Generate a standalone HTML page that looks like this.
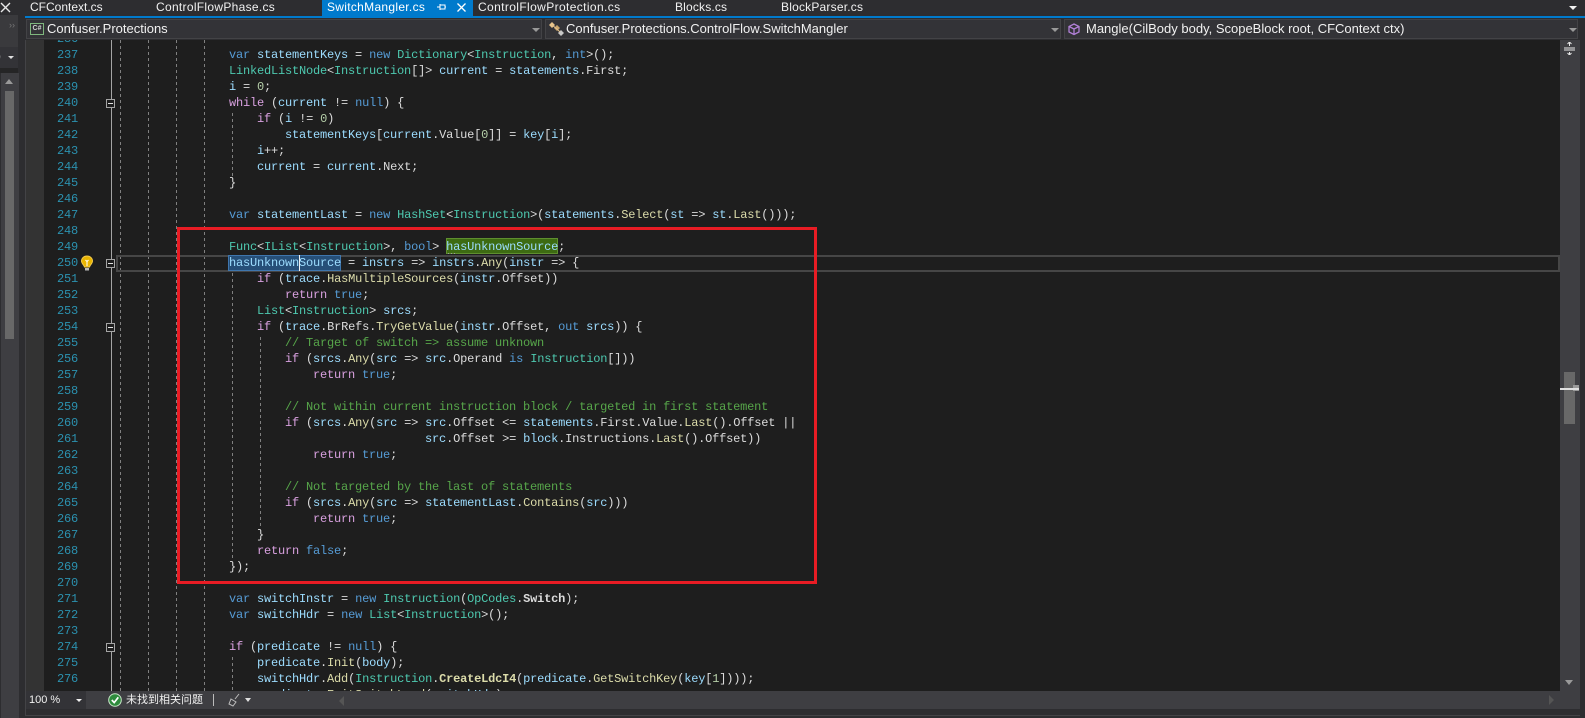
<!DOCTYPE html>
<html><head><meta charset="utf-8"><style>
html,body{margin:0;padding:0;background:#2d2d30;width:1585px;height:718px;overflow:hidden}
*{box-sizing:border-box}
.a{position:absolute}
.ui{font-family:"Liberation Sans","Noto Sans CJK SC",sans-serif;font-size:12px;color:#f1f1f1;white-space:pre;line-height:16px}
.nv{font-size:13px}
pre{margin:0;font-family:"Liberation Mono",monospace;font-size:12px;letter-spacing:-.2px;line-height:16px;color:#dcdcdc}
pre i{font-style:normal}
.k{color:#569cd6}.c{color:#d8a0df}.t{color:#4ec9b0}.v{color:#9cdcfe}.m{color:#dcdcaa}.g{color:#57a64a}.n{color:#b5cea8}
.mb{color:#dcdcaa;font-weight:bold}.w{color:#dcdcdc;font-weight:bold}
.gd{position:absolute;width:1px;background:repeating-linear-gradient(to bottom,#808080 0 3px,transparent 3px 6px)}
.fb{position:absolute;left:106px;width:9px;height:9px;background:#1e1e1e;border:1px solid #a5a5a5}
.fb:after{content:"";position:absolute;left:1px;top:3px;width:5px;height:1px;background:#e0e0e0}
.combo{position:absolute;top:19px;height:20px;background:#333337;border:1px solid #434346}
.arr{position:absolute;width:0;height:0;border-left:4px solid transparent;border-right:4px solid transparent;border-top:4px solid #999}
</style></head><body>

<!-- left panel -->
<div class="a" style="left:0;top:15px;width:18px;height:32px;background:#3a3a3d"></div>
<div class="a ui" style="left:9px;top:17px;color:#777;font-size:9px">››</div>
<div class="a" style="left:0;top:47px;width:18px;height:21px;background:#333337"></div>
<div class="a ui" style="left:-6px;top:49px;font-weight:bold">0</div>
<div class="arr" style="left:8px;top:56px;border-top-color:#e0e0e0;border-left-width:3px;border-right-width:3px;border-top-width:3px"></div>
<div class="a" style="left:0;top:68px;width:18px;height:5px;background:#252526"></div>
<div class="a" style="left:1px;top:73px;width:18px;height:645px;background:#3e3e42"></div>
<div class="a" style="left:5px;top:91px;width:9px;height:248px;background:#686868"></div>
<div class="a" style="left:5px;top:79px;width:0;height:0;border-left:4.5px solid transparent;border-right:4.5px solid transparent;border-bottom:5px solid #999"></div>
<svg class="a" style="left:0;top:2px" width="11" height="11"><path d="M1 1L10 10M10 1L1 10" stroke="#e8e8e8" stroke-width="1.4"/></svg>

<!-- tabs -->
<div class="a" style="left:322px;top:0;width:151px;height:16px;background:#007acc"></div>
<div class="a" style="left:25px;top:16px;width:1560px;height:2px;background:#007acc"></div>
<div class="a ui" style="left:30px;top:-1px">CFContext.cs</div>
<div class="a ui" style="left:156px;top:-1px;letter-spacing:.3px">ControlFlowPhase.cs</div>
<div class="a ui" style="left:327px;top:-1px;color:#fff;letter-spacing:.3px">SwitchMangler.cs</div>
<svg class="a" style="left:437px;top:3px" width="10" height="10"><path d="M3 1V7M3 2H8V6H3M8 4H9M0 4H3" stroke="#fff" fill="none"/></svg>
<svg class="a" style="left:456px;top:2px" width="11" height="11"><path d="M1.5 1.5L9.5 9.5M9.5 1.5L1.5 9.5" stroke="#fff" stroke-width="1.3"/></svg>
<div class="a ui" style="left:478px;top:-1px;letter-spacing:.38px">ControlFlowProtection.cs</div>
<div class="a ui" style="left:675px;top:-1px;letter-spacing:.17px">Blocks.cs</div>
<div class="a ui" style="left:781px;top:-1px;letter-spacing:.2px">BlockParser.cs</div>
<div class="a" style="left:1569px;top:6px;width:0;height:0;border-left:4px solid transparent;border-right:4px solid transparent;border-top:4px solid #f1f1f1"></div>

<!-- nav -->
<div class="combo" style="left:26px;width:516px"></div>
<div class="combo" style="left:545px;width:516px"></div>
<div class="combo" style="left:1064px;width:514px"></div>
<div class="a" style="left:30px;top:23px;width:14px;height:12px;border:1px solid #7fb77e;color:#d0d0d0;font:bold 7px/10px 'Liberation Sans',sans-serif;text-align:center">C#</div>
<div class="a ui nv" style="left:47px;top:21px">Confuser.Protections</div>
<div class="arr" style="left:532px;top:28px"></div>
<svg class="a" style="left:548px;top:21px" width="16" height="16"><path d="M1 4L4 1L7 4L4 7Z" fill="#e8c48a"/><path d="M6 7L9 4L12 7L9 10Z" fill="#c9a56a"/><path d="M10 12L13 9L16 12L13 15Z" fill="#c8c8c8"/><path d="M4 4L9 8L12 11" stroke="#e0c090" fill="none"/></svg>
<div class="a ui nv" style="left:566px;top:21px">Confuser.Protections.ControlFlow.SwitchMangler</div>
<div class="arr" style="left:1051px;top:28px"></div>
<svg class="a" style="left:1067px;top:22px" width="14" height="14"><path d="M7 2L12 4.5V10L7 12.5L2 10V4.5ZM2 4.5L7 7L12 4.5M7 7V12.5" stroke="#b180d7" stroke-width="1.3" fill="none"/></svg>
<div class="a ui nv" style="left:1086px;top:21px">Mangle(CilBody body, ScopeBlock root, CFContext ctx)</div>
<div class="arr" style="left:1569px;top:28px"></div>

<!-- margin + editor -->
<div class="a" style="left:25px;top:40px;width:1px;height:675px;background:#434346"></div>
<div class="a" style="left:26px;top:40px;width:18px;height:651px;background:#333333"></div>
<div class="a" style="left:44px;top:40px;width:1516px;height:651px;background:#1e1e1e"></div>

<div class="a" id="ed" style="left:0;top:40px;width:1560px;height:651px;overflow:hidden">
<div class="a" style="left:111px;top:0;width:1px;height:651px;background:#a5a5a5"></div>
<div class="gd" style="left:120px;top:0;height:651px"></div>
<div class="gd" style="left:148px;top:0;height:651px"></div>
<div class="gd" style="left:176px;top:0;height:651px"></div>
<div class="gd" style="left:204px;top:0;height:651px"></div>
<div class="gd" style="left:232px;top:73px;height:64px"></div>
<div class="gd" style="left:232px;top:233px;height:285px"></div>
<div class="gd" style="left:260px;top:297px;height:189px"></div>
<div class="gd" style="left:232px;top:617px;height:34px"></div>
<div class="a" style="left:116px;top:215px;width:1444px;height:17px;border:2px solid #464646"></div>
<div class="a" style="left:446px;top:198px;width:112px;height:16px;background:#3d6b12;border:1px solid #5f8f2f"></div>
<div class="a" style="left:228px;top:215px;width:113px;height:16px;background:#264f78;border:1px solid #3f76ad"></div>
<div class="fb" style="top:59px"></div>
<div class="fb" style="top:219px"></div>
<div class="fb" style="top:283px"></div>
<div class="fb" style="top:603px"></div>
<pre class="a" style="left:57px;top:-9px;color:#2b91af">236
237
238
239
240
241
242
243
244
245
246
247
248
249
250
251
252
253
254
255
256
257
258
259
260
261
262
263
264
265
266
267
268
269
270
271
272
273
274
275
276</pre>
<pre class="a" style="left:229px;top:7px"><i class=k>var</i> <i class=v>statementKeys</i> = <i class=k>new</i> <i class=t>Dictionary</i>&lt;<i class=t>Instruction</i>, <i class=k>int</i>&gt;();
<i class=t>LinkedListNode</i>&lt;<i class=t>Instruction</i>[]&gt; <i class=v>current</i> = <i class=v>statements</i>.First;
<i class=v>i</i> = <i class=n>0</i>;
<i class=c>while</i> (<i class=v>current</i> != <i class=k>null</i>) {
    <i class=c>if</i> (<i class=v>i</i> != <i class=n>0</i>)
        <i class=v>statementKeys</i>[<i class=v>current</i>.Value[<i class=n>0</i>]] = <i class=v>key</i>[<i class=v>i</i>];
    <i class=v>i</i>++;
    <i class=v>current</i> = <i class=v>current</i>.Next;
}

<i class=k>var</i> <i class=v>statementLast</i> = <i class=k>new</i> <i class=t>HashSet</i>&lt;<i class=t>Instruction</i>&gt;(<i class=v>statements</i>.<i class=m>Select</i>(<i class=v>st</i> =&gt; <i class=v>st</i>.<i class=m>Last</i>()));

<i class=t>Func</i>&lt;<i class=t>IList</i>&lt;<i class=t>Instruction</i>&gt;, <i class=k>bool</i>&gt; <i class=v>hasUnknownSource</i>;
<i class=v>hasUnknownSource</i> = <i class=v>instrs</i> =&gt; <i class=v>instrs</i>.<i class=m>Any</i>(<i class=v>instr</i> =&gt; {
    <i class=c>if</i> (<i class=v>trace</i>.<i class=m>HasMultipleSources</i>(<i class=v>instr</i>.Offset))
        <i class=c>return</i> <i class=k>true</i>;
    <i class=t>List</i>&lt;<i class=t>Instruction</i>&gt; <i class=v>srcs</i>;
    <i class=c>if</i> (<i class=v>trace</i>.BrRefs.<i class=m>TryGetValue</i>(<i class=v>instr</i>.Offset, <i class=k>out</i> <i class=v>srcs</i>)) {
        <i class=g>// Target of switch =&gt; assume unknown</i>
        <i class=c>if</i> (<i class=v>srcs</i>.<i class=m>Any</i>(<i class=v>src</i> =&gt; <i class=v>src</i>.Operand <i class=k>is</i> <i class=t>Instruction</i>[]))
            <i class=c>return</i> <i class=k>true</i>;

        <i class=g>// Not within current instruction block / targeted in first statement</i>
        <i class=c>if</i> (<i class=v>srcs</i>.<i class=m>Any</i>(<i class=v>src</i> =&gt; <i class=v>src</i>.Offset &lt;= <i class=v>statements</i>.First.Value.<i class=m>Last</i>().Offset ||
                            <i class=v>src</i>.Offset &gt;= <i class=v>block</i>.Instructions.<i class=m>Last</i>().Offset))
            <i class=c>return</i> <i class=k>true</i>;

        <i class=g>// Not targeted by the last of statements</i>
        <i class=c>if</i> (<i class=v>srcs</i>.<i class=m>Any</i>(<i class=v>src</i> =&gt; <i class=v>statementLast</i>.<i class=m>Contains</i>(<i class=v>src</i>)))
            <i class=c>return</i> <i class=k>true</i>;
    }
    <i class=c>return</i> <i class=k>false</i>;
});

<i class=k>var</i> <i class=v>switchInstr</i> = <i class=k>new</i> <i class=t>Instruction</i>(<i class=t>OpCodes</i>.<i class=w>Switch</i>);
<i class=k>var</i> <i class=v>switchHdr</i> = <i class=k>new</i> <i class=t>List</i>&lt;<i class=t>Instruction</i>&gt;();

<i class=c>if</i> (<i class=v>predicate</i> != <i class=k>null</i>) {
    <i class=v>predicate</i>.<i class=m>Init</i>(<i class=v>body</i>);
    <i class=v>switchHdr</i>.<i class=m>Add</i>(<i class=t>Instruction</i>.<i class=mb>CreateLdcI4</i>(<i class=v>predicate</i>.<i class=m>GetSwitchKey</i>(<i class=v>key</i>[<i class=n>1</i>])));
    <i class=v>predicate</i>.<i class=m>EmitSwitchLoad</i>(<i class=v>switchHdr</i>);</pre>
<div class="a" style="left:299px;top:215px;width:1px;height:16px;background:#f0f0f0"></div>
<div class="a" style="left:448px;top:213px;width:9px;height:1px;background:repeating-linear-gradient(to right,#9a9a9a 0 1px,transparent 1px 3px)"></div>
<svg class="a" style="left:80px;top:215px" width="14" height="17"><path d="M7 1C3.5 1 1.5 3.5 1.5 6C1.5 8.5 4 10 4.5 12H9.5C10 10 12.5 8.5 12.5 6C12.5 3.5 10.5 1 7 1Z" fill="#e8b400" stroke="#f2c94c"/><path d="M5 13H9V15.5H5Z" fill="#b8b8b8"/><path d="M5.5 5L7 6.5L8.5 5M7 6.5V11" stroke="#fff" fill="none"/></svg>
</div>

<!-- right scrollbar -->
<div class="a" style="left:1560px;top:40px;width:20px;height:651px;background:#3e3e42"></div>
<svg class="a" style="left:1563px;top:42px" width="13" height="13"><path d="M1 6H12M1 8H12M6.5 0V4M6.5 10V13" stroke="#e8e8e8"/><path d="M4.5 2L6.5 0L8.5 2M4.5 11L6.5 13L8.5 11" stroke="#e8e8e8" fill="none"/></svg>
<div class="a" style="left:1564px;top:372px;width:11px;height:52px;background:#686868"></div>
<div class="a" style="left:1573px;top:385px;width:6px;height:6px;background:#999"></div>
<div class="a" style="left:1560px;top:388px;width:19px;height:2px;background:#e0e0e0"></div>
<div class="a" style="left:1565px;top:680px;width:0;height:0;border-left:4.5px solid transparent;border-right:4.5px solid transparent;border-top:5px solid #999"></div>

<!-- status bar -->
<div class="a" style="left:26px;top:691px;width:1554px;height:18px;background:#3e3e42"></div>
<div class="a" style="left:26px;top:691px;width:60px;height:18px;background:#333337"></div>
<div class="a ui" style="left:29px;top:692px;font-size:11px">100 %</div>
<div class="a" style="left:76px;top:699px;width:0;height:0;border-left:3px solid transparent;border-right:3px solid transparent;border-top:3px solid #f1f1f1"></div>
<svg class="a" style="left:108px;top:693px" width="14" height="14"><circle cx="7" cy="7" r="6.3" fill="#2e8b3d" stroke="#c8e6c9" stroke-width="1"/><path d="M3.8 7L6.2 9.6L10.3 4.3" stroke="#fff" stroke-width="1.7" fill="none"/></svg>
<div class="a ui" style="left:126px;top:692px;font-size:11px">未找到相关问题</div>
<div class="a" style="left:213px;top:694px;width:1px;height:12px;background:#bbb"></div>
<svg class="a" style="left:228px;top:693px" width="13" height="14"><path d="M11 1L7 6M3 6L8 9L5 13L1 11Z" stroke="#bdbdbd" fill="none"/></svg>
<div class="a" style="left:245px;top:698px;width:0;height:0;border-left:3.5px solid transparent;border-right:3.5px solid transparent;border-top:4px solid #e0e0e0"></div>
<div class="a" style="left:339px;top:696px;width:0;height:0;border-top:5px solid transparent;border-bottom:5px solid transparent;border-right:5px solid #555"></div>
<div class="a" style="left:1549px;top:695px;width:0;height:0;border-top:5px solid transparent;border-bottom:5px solid transparent;border-left:5px solid #555"></div>
<div class="a" style="left:25px;top:715px;width:1555px;height:1px;background:#434346"></div>

<!-- red box -->
<div class="a" style="left:177px;top:227px;width:640px;height:357px;border:3px solid #e81c24"></div>
</body></html>
